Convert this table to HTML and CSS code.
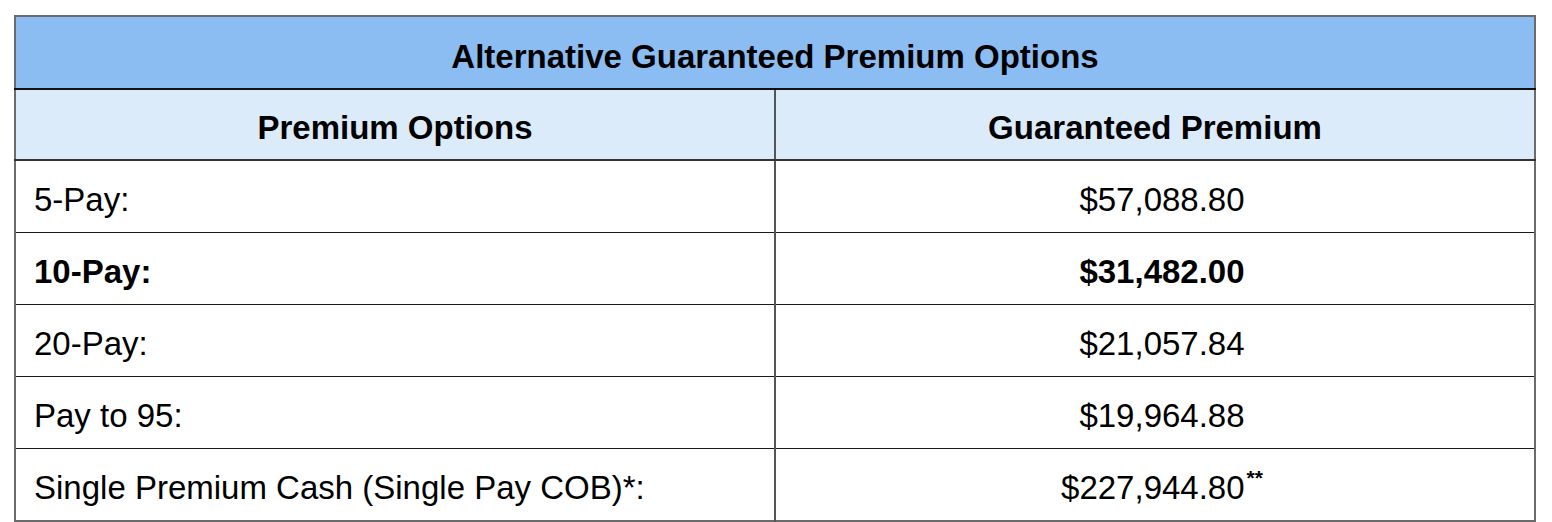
FILE: index.html
```html
<!DOCTYPE html>
<html>
<head>
<meta charset="utf-8">
<link rel="stylesheet" href="styles.css">
</head>
<body>
<table class="premium-table">
  <thead>
    <tr class="title-row"><th colspan="2">Alternative Guaranteed Premium Options</th></tr>
    <tr class="head-row"><th class="col-left">Premium Options</th><th>Guaranteed Premium</th></tr>
  </thead>
  <tbody>
    <tr><td class="label">5-Pay:</td><td class="value">$57,088.80</td></tr>
    <tr class="bold"><td class="label">10-Pay:</td><td class="value">$31,482.00</td></tr>
    <tr><td class="label">20-Pay:</td><td class="value">$21,057.84</td></tr>
    <tr><td class="label">Pay to 95:</td><td class="value">$19,964.88</td></tr>
    <tr><td class="label">Single Premium Cash (Single Pay COB)*:</td><td class="value">$227,944.80<sup>**</sup></td></tr>
  </tbody>
</table>
</body>
</html>
```
FILE: styles.css
```css
html, body {
  margin: 0;
  padding: 0;
  background: #ffffff;
}
body {
  font-family: "Liberation Sans", Arial, sans-serif;
  color: #000;
}
.premium-table {
  margin: 15px 0 0 14px;
  width: 1522px;
  border-collapse: collapse;
  border: 2px solid #6b6b6b;
  table-layout: fixed;
}
.premium-table th,
.premium-table td {
  border: 1px solid #1a1a1a;
  padding: 0;
  font-size: 33px;
  line-height: 38px;
}
.col-left {
  width: 760px;
}
.title-row th {
  background: #8bbdf2;
  height: 62px;
  padding-top: 9px;
  font-weight: bold;
  text-align: center;
  border-bottom: 2px solid #111;
}
.head-row th {
  background: #dbebfa;
  height: 62px;
  padding-top: 7px;
  font-weight: bold;
  text-align: center;
  border-bottom: 2px solid #333;
}
.head-row th.col-left {
  border-right: 2px solid #555;
}
tbody td {
  height: 65px;
  padding-top: 6px !important;
}
tbody td.label {
  padding-left: 18px !important;
  border-right: 2px solid #555;
}
tbody td.value {
  text-align: center;
  padding-left: 14px !important;
}
tr.bold td {
  font-weight: bold;
}
sup {
  font-size: 21px;
  font-weight: bold;
  line-height: 0;
  vertical-align: 14px;
  margin-left: 2px;
}
```
